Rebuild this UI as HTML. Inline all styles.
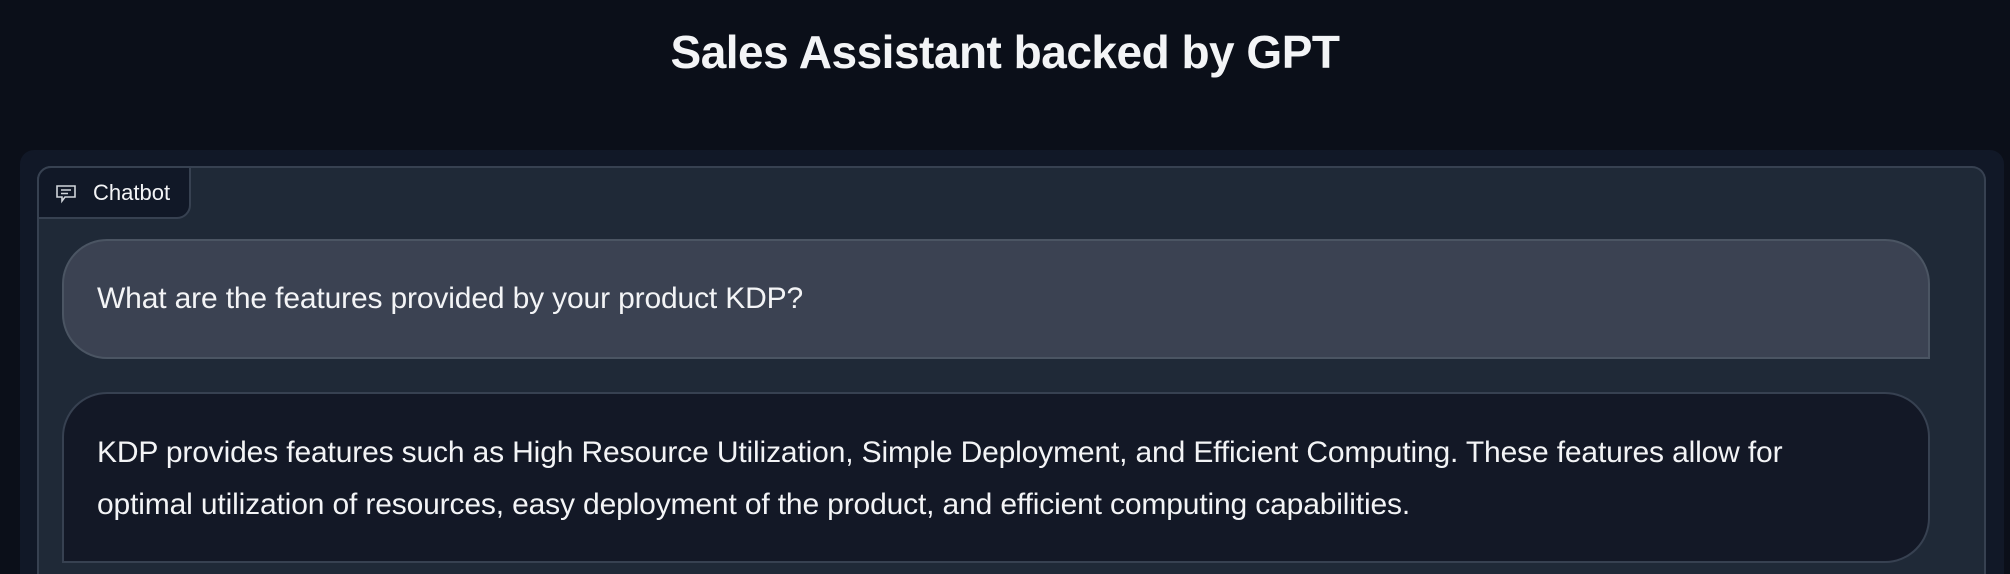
<!DOCTYPE html>
<html style="overflow:hidden;height:574px"><head><style>
body{margin:0;width:2010px;height:574px;background:#0b0f19;overflow:hidden;font-family:"Liberation Sans",sans-serif;color:#f3f4f6;position:relative}
h1{position:absolute;top:22px;left:0;width:2010px;text-align:center;margin:0;font-size:46px;font-weight:bold;line-height:60px;letter-spacing:-0.5px}
.outer{position:absolute;left:20px;top:150px;width:1984px;height:424px;background:#111827;border-radius:14px 14px 0 0}
.panel{position:absolute;left:37px;top:166px;width:1949px;height:408px;background:#1f2937;border:2px solid #374151;border-bottom:0;border-radius:14px 14px 0 0;box-sizing:border-box}
.tab{position:absolute;left:37px;top:166px;width:154px;height:53px;background:#111827;border:2px solid #374151;border-radius:14px 0 14px 0;box-sizing:border-box;font-size:22px;line-height:49px}
.tab span{position:absolute;left:54px}
.tab svg{position:absolute;left:16px;top:16px}
.b{position:absolute;left:62px;width:1868px;box-sizing:border-box;border:2px solid #4b5563;font-size:30px;padding-left:33px;letter-spacing:-0.15px}
.u{top:239px;height:120px;background:#3b4252;border-radius:45px 45px 0 45px;line-height:116px}
.k{top:392px;height:171px;background:#131826;border-color:#374151;border-radius:45px 45px 45px 0;padding-top:33px;line-height:52px}
</style></head><body>
<h1>Sales Assistant backed by GPT</h1>
<div class="outer"></div>
<div class="panel"></div>
<div class="tab"><svg width="22" height="20" viewBox="0 0 22 20" fill="none" stroke="#d1d5db" stroke-width="1.6"><path d="M2 2h18v11H10l-3 4v-4H2z"/><path d="M6 6h10M6 9.5h7"/></svg><span>Chatbot</span></div>
<div class="b u">What are the features provided by your product KDP?</div>
<div class="b k">KDP provides features such as High Resource Utilization, Simple Deployment, and Efficient Computing. These features allow for<br>optimal utilization of resources, easy deployment of the product, and efficient computing capabilities.</div>
</body></html>
